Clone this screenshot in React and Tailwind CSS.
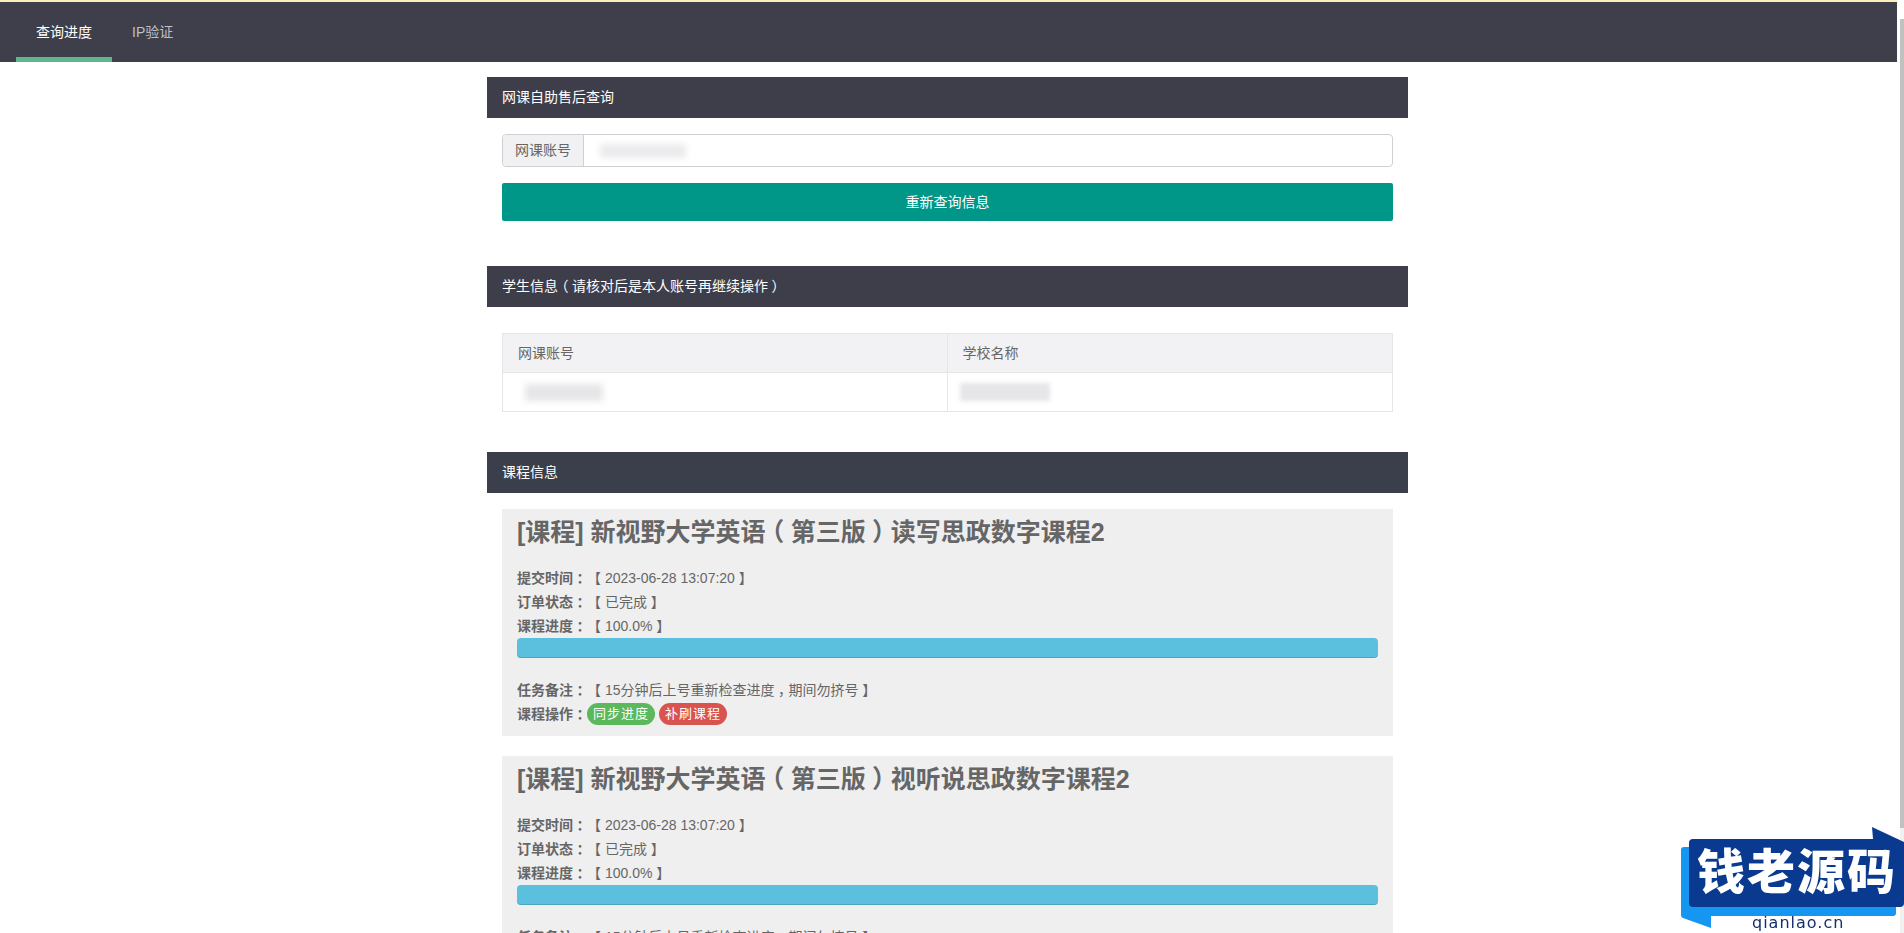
// 网课自助售后查询 page
const courses = [
  { name: '读写思政数字课程2' },
  { name: '视听说思政数字课程2' },
];

// the picture has these marks centred in their box: halve the glyph's advance and pad both sides
const Mark = ({ children }) => <span className="px-[0.25em] [font-feature-settings:'halt']">{children}</span>;

function PanelHeader({ children, className = 'bg-[#3e3e4a]' }) {
  return (
    <div className={`h-[41px] px-[15px] flex items-center text-[14px] text-white ${className}`}>
      <span>{children}</span>
    </div>
  );
}

function Row({ label, children }) {
  return (
    <div className="h-6 flex items-center text-[14px] text-[#666]">
      <b className="font-bold">
        {label}
        <Mark>：</Mark>
      </b>
      <span className="flex items-center">{children}</span>
    </div>
  );
}

function CourseCard({ course }) {
  return (
    <div className="bg-[#efeff0] px-[15px] pt-[8px] pb-[10px] mb-5">
      <h3 className="h-[30px] leading-[30px] text-[25px] font-bold text-[#666]">
        [课程] 新视野大学英语
        <Mark>（</Mark>
        第三版
        <Mark>）</Mark>
        {course.name}
      </h3>
      <div className="mt-[19px]">
        <Row label="提交时间">【 2023-06-28 13:07:20 】</Row>
        <Row label="订单状态">【 已完成 】</Row>
        <Row label="课程进度">【 100.0% 】</Row>
      </div>
      <div className="h-5 rounded-[4px] bg-[#5bc0de] shadow-[inset_0_-1px_0_rgba(0,0,0,0.15)]" />
      <div className="mt-5">
        <Row label="任务备注">
          <span>
            【 15分钟后上号重新检查进度
            <Mark>，</Mark>
            期间勿挤号 】
          </span>
        </Row>
        <Row label="课程操作">
          <span className="h-[22px] w-[68px] rounded-full bg-[#5cb85c] text-white text-[13px] tracking-[1px] flex items-center justify-center">
            同步进度
          </span>
          <span className="ml-1 h-[22px] w-[68px] rounded-full bg-[#d9534f] text-white text-[13px] tracking-[1px] flex items-center justify-center">
            补刷课程
          </span>
        </Row>
      </div>
    </div>
  );
}

function Logo() {
  return (
    <div className="fixed right-0 bottom-0 w-[224px] h-[108px]">
      <svg viewBox="0 0 224 108" className="w-full h-full">
        <path d="M1 25a3 3 0 0 1 3-3h209a3 3 0 0 1 3 3v63a3 3 0 0 1-3 3H31v12L3 93a3 3 0 0 1-2-3z" fill="#1596f0" />
        <path d="M9 18a4 4 0 0 1 4-4h180l-1-12 32 15v61a4 4 0 0 1-4 4H13a4 4 0 0 1-4-4z" fill="#0a3a8f" />
      </svg>
      <div className="absolute left-[17px] top-[22px] text-[48px] leading-[52px] font-black tracking-[2px] whitespace-nowrap text-white">
        钱老源码
      </div>
      <div className="absolute left-[72px] bottom-0 text-[16px] leading-[20px] tracking-[1px] whitespace-nowrap text-[#16306e] font-['DejaVu_Sans',sans-serif]">
        qianlao.cn
      </div>
    </div>
  );
}

export default function App() {
  return (
    <div className="h-screen overflow-hidden flex bg-white font-['Liberation_Sans','Noto_Sans_CJK_SC',sans-serif]">
      <div className="flex-1 min-w-0">
        <div className="h-[2px] bg-[#fbeebc]" />
        <nav className="h-[60px] bg-[#3e3f4a] flex pl-4 text-[14px]">
          <div className="relative w-[96px] flex items-center justify-center text-white">
            查询进度
            <span className="absolute left-0 right-0 bottom-0 h-[5px] bg-[#5fb58c]" />
          </div>
          <div className="ml-[20px] flex items-center text-[#bfbfc4]">IP验证</div>
        </nav>

        <div className="ml-[487px] w-[921px] pt-[15px]">
          <PanelHeader>网课自助售后查询</PanelHeader>
          <div className="px-[15px] pt-4">
            <div className="h-[33px] flex border border-[#cfcfd4] rounded-[4px] text-[14px]">
              <div className="w-[81px] bg-[#f1f1f3] border-r border-[#cfcfd4] rounded-l-[4px] flex items-center justify-center text-[#666]">
                网课账号
              </div>
              <div className="flex-1 flex items-center pl-4">
                <span className="w-[86px] h-[14px] bg-[#ebebed] blur-[3px]" />
              </div>
            </div>
            <button className="mt-4 w-full h-[38px] rounded-[2px] bg-[#009688] text-white text-[14px]">
              重新查询信息
            </button>
          </div>

          <PanelHeader className="mt-[45px] bg-[#3e3e4a]">
            学生信息
            <Mark>（</Mark>
            请核对后是本人账号再继续操作
            <Mark>）</Mark>
          </PanelHeader>
          <div className="px-[15px] pt-[26px]">
            <div className="grid grid-cols-2 border border-[#e6e6e9] text-[14px] text-[#666]">
              <div className="h-[39px] bg-[#f2f2f5] border-b border-r border-[#e6e6e9] flex items-center px-[15px]">网课账号</div>
              <div className="h-[39px] bg-[#f2f2f5] border-b border-[#e6e6e9] flex items-center px-[15px]">学校名称</div>
              <div className="h-[38px] border-r border-[#e6e6e9] flex items-center pl-[22px]">
                <span className="w-[78px] h-[17px] bg-[#e6e6e8] blur-[3px]" />
              </div>
              <div className="h-[38px] flex items-center pl-[12px]">
                <span className="w-[90px] h-[18px] bg-[#e6e6e8] blur-[2px]" />
              </div>
            </div>
          </div>

          <PanelHeader className="mt-[40px] bg-[#3a3f4b]">课程信息</PanelHeader>
          <div className="px-[15px] pt-4">
            {courses.map((c) => (
              <CourseCard key={c.name} course={c} />
            ))}
          </div>
        </div>
      </div>

      {/* scrollbar strip on the right edge */}
      <div className="w-[7px] pl-[3px] pt-[19px] flex flex-col">
        <div className="h-[809px] bg-[#c1c1c1]" />
        <div className="flex-1 bg-[#f1f1f1]" />
      </div>

      <Logo />
    </div>
  );
}
